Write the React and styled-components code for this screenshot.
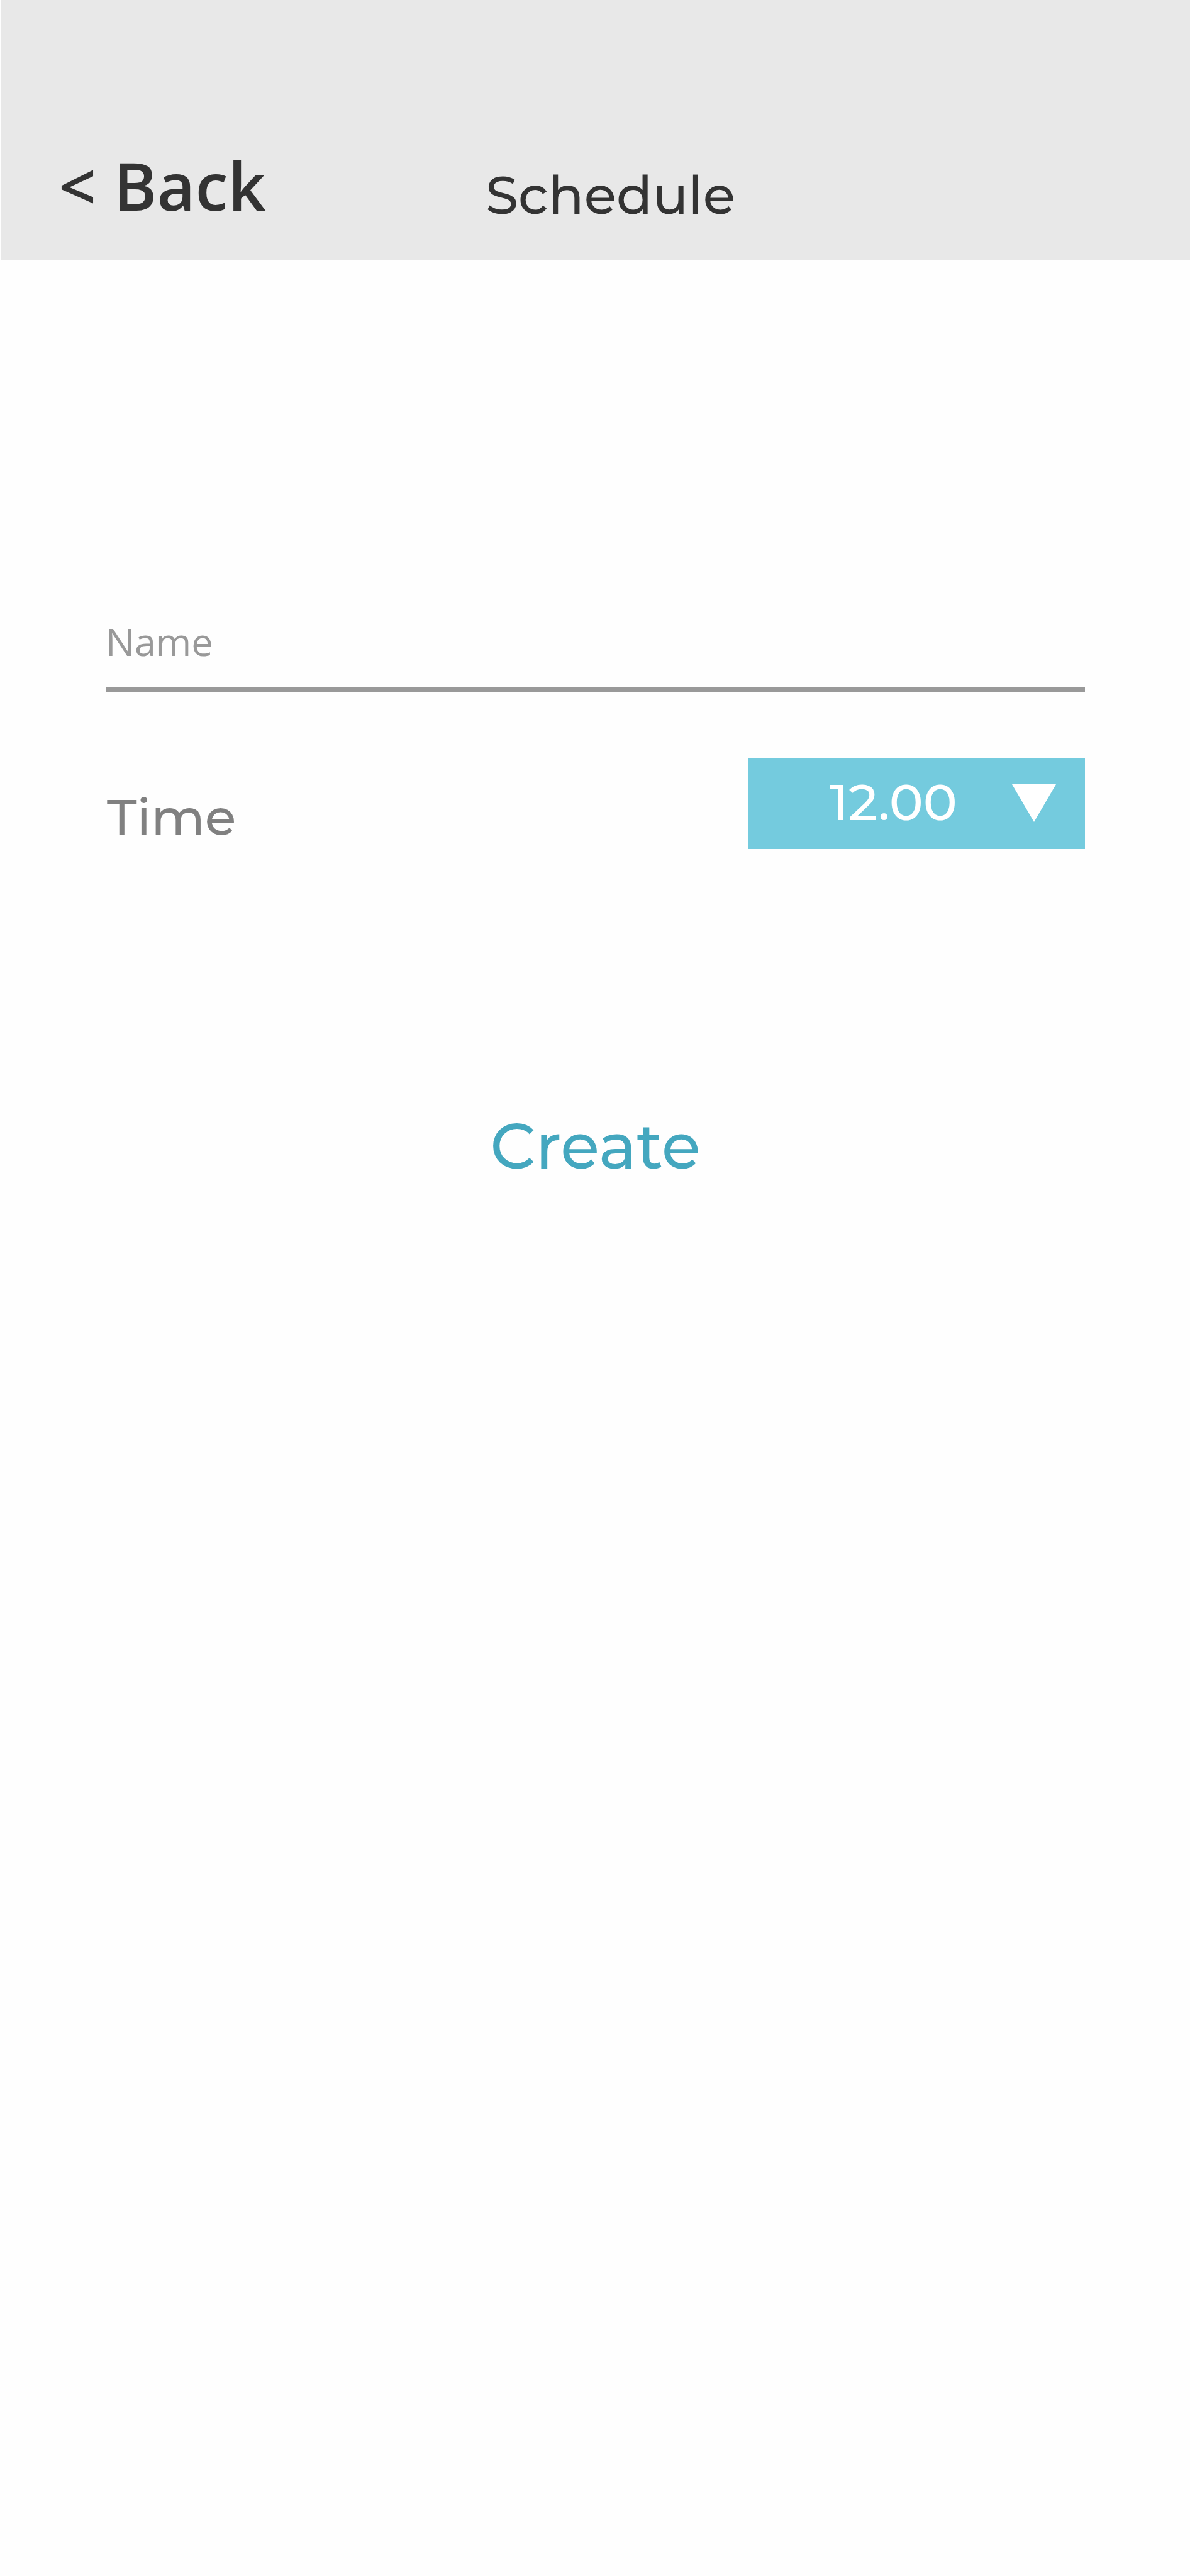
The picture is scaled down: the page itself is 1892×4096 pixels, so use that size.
import React, { useState } from "react";
import styled, { createGlobalStyle } from "styled-components";

const GlobalStyle = createGlobalStyle`
  *, *::before, *::after { box-sizing: border-box; }
  body { margin: 0; background: #fefefe; }
`;

const bodyFont = `"Open Sans", "Noto Sans", sans-serif`;
const displayFont = `Montserrat, Inter, sans-serif`;

const Screen = styled.div`
  min-height: 100vh;
  background: #fefefe;
  font-family: ${bodyFont};
`;

const Header = styled.header`
  display: grid;
  grid-template-columns: 1fr auto 1fr;
  align-items: end;
  margin-left: 2px;
  padding: 235px 44px 58px 91px;
  background: #e8e8e8;
  color: #333333;
`;

const BackLink = styled.a`
  justify-self: start;
  color: inherit;
  font-size: 105px;
  font-weight: 600;
  line-height: 120px;
  text-decoration: none;
  white-space: nowrap;
`;

const Title = styled.h1`
  margin: 0;
  font-family: ${displayFont};
  font-size: 84px;
  font-weight: 500;
  line-height: 90px;
`;

const Form = styled.form`
  display: flex;
  flex-direction: column;
  padding: 564px 167px 0 168px;
`;

const NameInput = styled.input`
  width: 100%;
  height: 123px;
  padding: 0 0 32px;
  border: 0;
  border-bottom: 7px solid #999999;
  border-radius: 0;
  outline: 0;
  background: transparent;
  color: #808080;
  font-family: ${bodyFont};
  font-size: 61px;
  line-height: 84px;

  &::placeholder {
    color: #999999;
    opacity: 1;
  }
`;

const TimeRow = styled.div`
  display: flex;
  justify-content: space-between;
  align-items: flex-end;
  margin-top: 105px;
`;

const TimeLabel = styled.label`
  padding-left: 2px;
  color: #808080;
  font-family: ${displayFont};
  font-size: 81px;
  font-weight: 500;
  line-height: 102px;
`;

const SelectBox = styled.div`
  position: relative;
  width: 535px;
`;

const TimeSelect = styled.select`
  display: block;
  width: 100%;
  height: 145px;
  padding: 0 120px 5px 129px;
  border: 0;
  border-radius: 0;
  appearance: none;
  background: #74cbde;
  color: #ffffff;
  font-family: ${displayFont};
  font-size: 81px;
  font-weight: 500;
  cursor: pointer;
`;

const Arrow = styled.svg`
  position: absolute;
  top: 42px;
  right: 46px;
  width: 70px;
  height: 60px;
  fill: #ffffff;
  pointer-events: none;
`;

const CreateButton = styled.button`
  align-self: center;
  margin-top: 412px;
  padding: 0;
  border: 0;
  background: transparent;
  color: #44a7bf;
  font-family: ${displayFont};
  font-size: 101px;
  font-weight: 500;
  line-height: 120px;
  cursor: pointer;
`;

const times = ["12.00", "13.00", "14.00", "15.00", "16.00"];

export default function App() {
  const [name, setName] = useState("");
  const [time, setTime] = useState(times[0]);

  return (
    <>
      <GlobalStyle />
      <Screen>
        <Header>
          <BackLink href="#back">&lt; Back</BackLink>
          <Title>Schedule</Title>
        </Header>
        <Form onSubmit={(event) => event.preventDefault()}>
          <NameInput
            type="text"
            aria-label="Name"
            placeholder="Name"
            value={name}
            onChange={(event) => setName(event.target.value)}
          />
          <TimeRow>
            <TimeLabel htmlFor="time">Time</TimeLabel>
            <SelectBox>
              <TimeSelect
                id="time"
                value={time}
                onChange={(event) => setTime(event.target.value)}
              >
                {times.map((option) => (
                  <option key={option}>{option}</option>
                ))}
              </TimeSelect>
              <Arrow viewBox="0 0 70 60" aria-hidden="true">
                <polygon points="0,0 70,0 35,60" />
              </Arrow>
            </SelectBox>
          </TimeRow>
          <CreateButton type="submit">Create</CreateButton>
        </Form>
      </Screen>
    </>
  );
}
